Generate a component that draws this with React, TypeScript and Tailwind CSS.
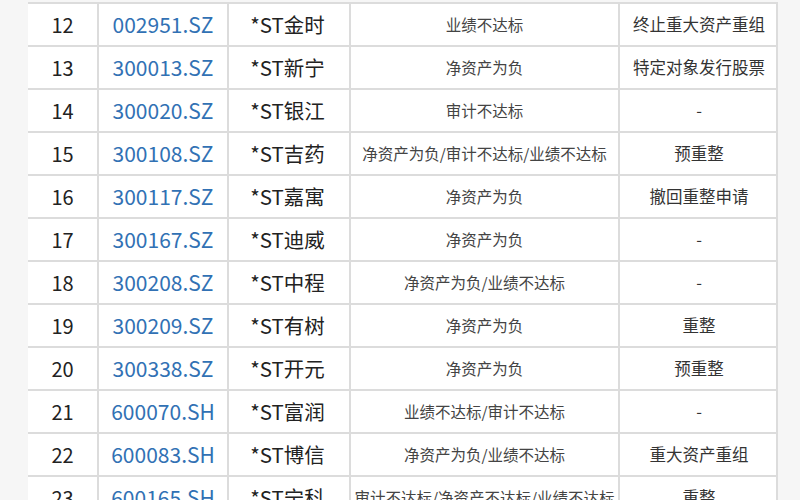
import React from "react";

type Row = {
  no: number;
  code: string;
  name: string;
  reason: string;
  note: string;
};

const rows: Row[] = [
  { no: 12, code: "002951.SZ", name: "*ST金时", reason: "业绩不达标", note: "终止重大资产重组" },
  { no: 13, code: "300013.SZ", name: "*ST新宁", reason: "净资产为负", note: "特定对象发行股票" },
  { no: 14, code: "300020.SZ", name: "*ST银江", reason: "审计不达标", note: "-" },
  { no: 15, code: "300108.SZ", name: "*ST吉药", reason: "净资产为负/审计不达标/业绩不达标", note: "预重整" },
  { no: 16, code: "300117.SZ", name: "*ST嘉寓", reason: "净资产为负", note: "撤回重整申请" },
  { no: 17, code: "300167.SZ", name: "*ST迪威", reason: "净资产为负", note: "-" },
  { no: 18, code: "300208.SZ", name: "*ST中程", reason: "净资产为负/业绩不达标", note: "-" },
  { no: 19, code: "300209.SZ", name: "*ST有树", reason: "净资产为负", note: "重整" },
  { no: 20, code: "300338.SZ", name: "*ST开元", reason: "净资产为负", note: "预重整" },
  { no: 21, code: "600070.SH", name: "*ST富润", reason: "业绩不达标/审计不达标", note: "-" },
  { no: 22, code: "600083.SH", name: "*ST博信", reason: "净资产为负/业绩不达标", note: "重大资产重组" },
  { no: 23, code: "600165.SH", name: "*ST宁科", reason: "审计不达标/净资产不达标/业绩不达标", note: "重整" },
];

const cell = "flex items-center justify-center border-l-2 border-[#dcdcdc] whitespace-nowrap";

const App: React.FC = () => {
  return (
    <div
      className="w-[800px] h-[500px] overflow-hidden bg-[#f6f6f6] pt-[2px]"
      style={{ fontFamily: '"Noto Sans CJK SC", "Noto Sans", sans-serif' }}
    >
      <div className="ml-[28px] w-[750px] bg-white border-r-2 border-[#dcdcdc]">
        {rows.map((r) => (
          <div
            key={r.no}
            className="grid grid-cols-[69px_130px_122px_269px_160px] h-[43px] border-t-2 border-[#dcdcdc]"
          >
            <div className="flex items-center justify-center text-[20px] text-[#222]">{r.no}</div>
            <div className={`${cell} text-[21px] text-[#3171b4]`}>{r.code}</div>
            <div className={`${cell} text-[20.5px] text-[#222] pr-[3px]`}>{r.name}</div>
            <div className={`${cell} text-[15.5px] text-[#444]`}>{r.reason}</div>
            <div className={`${cell} text-[16.5px] text-[#333]`}>{r.note}</div>
          </div>
        ))}
      </div>
    </div>
  );
};

export default App;
